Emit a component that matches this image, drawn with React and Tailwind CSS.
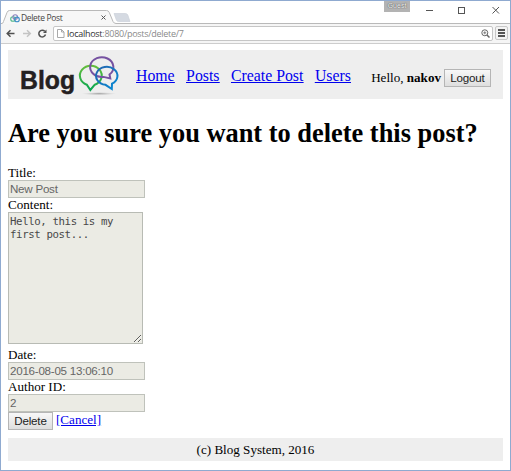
import React from "react";

function Favicon() {
  return (
    <svg className="ml-[9px] mt-[1px] h-[9px] w-[10px] shrink-0" viewBox="0 0 10 9" fill="none" strokeWidth="1.1">
      <circle cx="3" cy="5" r="2.3" stroke="#54b98b" />
      <circle cx="5.2" cy="3" r="2.3" stroke="#8d83bd" />
      <circle cx="7" cy="5.4" r="2.3" stroke="#4290c8" />
    </svg>
  );
}

function TabStrip() {
  return (
    <div className="relative flex h-[22px] items-start">
      <svg className="absolute left-0 top-0 h-[23px] w-[509px]" viewBox="0 0 509 23" fill="none">
        <path d="M0 22.5H2L6 11.500Q6.800 9.500 8.500 9.500H105.500Q107.500 9.500 108.300 11.500L113 22.500V23H0Z" fill="#f7f7f7" />
        <path d="M0 22.500H1Q2 22.500 2.500 20.500L6 11.500Q6.800 9.500 8.500 9.500H105.500Q107.500 9.500 108.300 11.500L112 20.500Q113 22.500 115 22.500H509" stroke="#b9b9b9" />
        <path d="M113 12.500H124.500Q126 12.500 126.800 14L129 20.500H117.500Q116 20.500 115.400 19Z" fill="#d5dae2" stroke="#cbd1da" strokeWidth=".7" />
      </svg>
      <div className="relative mt-[11px] flex h-[11px] w-[108px] items-center">
        <Favicon />
        <span className="ml-[1px] whitespace-nowrap font-['Open_Sans',sans-serif] text-[8.5px] leading-[11px] tracking-[-0.35px] text-[#444]">Delete Post</span>
        <svg className="ml-auto mr-[3px] h-[5px] w-[5px]" viewBox="0 0 5 5">
          <path d="M.5 .5L4.500 4.500M4.500 .5L.5 4.500" stroke="#555" />
        </svg>
      </div>
      <div className="relative ml-[275px] h-[11px] w-[26px] bg-[#b3b3b3] text-center font-['Liberation_Sans',sans-serif] text-[7px] leading-[10px] text-[#f4f4f4] [text-shadow:0_0_1px_#555,0_0_1px_#555]">Guest</div>
      <svg className="absolute left-[424px] top-[5px] h-[9px] w-[75px]" viewBox="0 0 75 9" fill="none" stroke="#555">
        <path d="M1 4.500H8M67.500 1L74 7.500M74 1L67.500 7.500" />
        <rect x="33.500" y="1.500" width="6" height="6" />
      </svg>
    </div>
  );
}

function Toolbar() {
  return (
    <div className="flex h-[21px] items-center border-b border-[#cdcdcd] bg-[#f5f5f5]">
      <svg className="h-[20px] w-[52px] shrink-0" viewBox="0 0 52 20" fill="none" strokeWidth="1.500">
        <path d="M13.500 10.500H6.500M9.500 7.200L6.200 10.500L9.500 13.800" stroke="#505050" />
        <path d="M22 10.500H29M26 7.200L29.300 10.500L26 13.800" stroke="#c4c4c4" />
        <path d="M43.800 8.300A3.400 3.400 0 1 0 44.500 11.500" stroke="#505050" />
        <path d="M45.500 6.500V10H42Z" fill="#505050" />
      </svg>
      <div className="flex h-[15px] w-[99px] grow items-center rounded-[2px] border border-[#c6c6c6] bg-white">
        <svg className="ml-[3px] h-[9px] w-[8px]" viewBox="0 0 8 9" fill="none" stroke="#a0a0a0" strokeWidth=".9">
          <path d="M.5 .5H4.500L7 3V8.500H.5ZM4.500 .5V3H7" />
        </svg>
        <span className="ml-[2px] mt-[1px] whitespace-nowrap font-['Open_Sans',sans-serif] text-[9px] leading-[12px] tracking-[-0.27px] text-[#8a8a8a]">
          <span className="text-[#333]">localhost</span>:8080/posts/delete/7
        </span>
        <svg className="ml-auto mr-[2px] h-[9px] w-[9px]" viewBox="0 0 9 9" fill="none" stroke="#666">
          <path d="M6 6L8.500 8.500" strokeWidth="1.500" />
          <circle cx="3.800" cy="3.800" r="3" />
          <path d="M2.300 3.800H5.300M3.800 2.300V5.300" strokeWidth=".8" />
        </svg>
      </div>
      <div className="ml-[2px] mr-[2px] flex h-[14px] w-[13px] shrink-0 flex-col items-center justify-center gap-[1px] rounded-[2px] border border-[#c8c8c8] bg-[#f4f4f4]">
        <div className="h-[2px] w-[7px] bg-[#555]" />
        <div className="h-[2px] w-[7px] bg-[#555]" />
        <div className="h-[2px] w-[7px] bg-[#555]" />
      </div>
    </div>
  );
}

function Logo() {
  return (
    <svg className="h-[49px] w-[115px] shrink-0" viewBox="0 0 115 49">
      <defs>
        <radialGradient id="shadow">
          <stop offset="0" stopColor="#777" stopOpacity=".65" />
          <stop offset="1" stopColor="#aaa" stopOpacity="0" />
        </radialGradient>
        <linearGradient id="green" x1="0" y1="0" x2="0" y2="1">
          <stop stopColor="#64bd3c" />
          <stop offset="1" stopColor="#08a651" />
        </linearGradient>
        <linearGradient id="blue" x1="0" y1="0" x2="1" y2="1">
          <stop stopColor="#2364ae" />
          <stop offset="1" stopColor="#078bd5" />
        </linearGradient>
      </defs>
      <text x="12" y="38.500" textLength="55" lengthAdjust="spacingAndGlyphs" fill="#242021" stroke="#242021" strokeWidth=".5" fontFamily="Liberation Sans, Arial, sans-serif" fontSize="26.500" fontWeight="700">Blog</text>
      <ellipse cx="91" cy="43.700" rx="17" ry="1.600" fill="url(#shadow)" />
      <g fill="none" strokeWidth="2" strokeLinejoin="miter">
        <path d="M82.300 40L78.800 34.700A10.900 9.800 0 1 1 86.800 34.700Z" stroke="url(#green)" />
        <path d="M102.300 28.500L101.500 24.500A11.600 9.900 0 1 0 95.500 26.900Z" stroke="#7652a1" />
        <path d="M103.800 39L104 33.700A10.700 9 0 1 0 97.500 34.800Z" stroke="url(#blue)" />
      </g>
    </svg>
  );
}

function Button({ children, className }) {
  return (
    <button className={`block border border-[#b5b5b5] bg-linear-to-b from-[#f8f8f8] to-[#dedede] p-0 text-center font-['Liberation_Sans',Arial,sans-serif] text-[#222] ${className}`}>
      {children}
    </button>
  );
}

function Field({ label, value }) {
  return (
    <label className="block">
      <span className="block h-[14px] leading-[14px]">{label}</span>
      <input
        disabled
        value={value}
        className="block h-[18px] w-[137px] rounded-none border border-[#bfc2bb] bg-[#ebebe4] px-[1px] pt-0 pb-[1px] font-['Liberation_Sans',Arial,sans-serif] text-[11.6px] leading-[15px] tracking-[-0.25px] text-[#666]"
      />
    </label>
  );
}

export default function App() {
  return (
    <div className="h-[471px] w-[511px] overflow-hidden border border-[#8faad0] bg-white font-['Liberation_Serif','Times_New_Roman',serif] text-[13.1px] text-black">
      <TabStrip />
      <Toolbar />
      <main className="px-[7px] pt-[6px]">
        <header className="flex h-[49px] bg-[#eee]">
          <Logo />
          <nav className="ml-[13px] flex gap-[11.500px] pt-[16px] text-[15.800px] leading-[20px] text-[#0000ee] underline">
            <a href="#home">Home</a>
            <a href="#posts">Posts</a>
            <a href="#create" className="whitespace-nowrap">Create Post</a>
            <a href="#users">Users</a>
          </nav>
          <div className="ml-auto mr-[12px] flex gap-[3px] whitespace-nowrap pt-[19px]">
            <span className="leading-[17px]">Hello, <b>nakov</b></span>
            <Button className="h-[18px] w-[47px] text-[11.600px] leading-[16px] tracking-[-0.2px]">Logout</Button>
          </div>
        </header>
        <h1 className="mt-[19px] h-[30px] whitespace-nowrap text-[26.400px] font-bold leading-[30px]">Are you sure you want to delete this post?</h1>
        <form className="mt-[18px]">
          <Field label="Title:" value="New Post" />
          <label className="block">
            <span className="block h-[14px] leading-[14px]">Content:</span>
            <textarea
              disabled
              value="Hello, this is my first post..."
              className="block h-[132px] w-[135px] resize rounded-none border border-[#b8bbb4] bg-[#ebebe4] px-[1px] py-[3px] font-['DejaVu_Sans_Mono',monospace] text-[10.700px] leading-[12.500px] tracking-[-0.37px] text-[#484848]"
            />
          </label>
          <div className="mt-[4px]">
            <Field label="Date:" value="2016-08-05 13:06:10" />
            <Field label="Author ID:" value="2" />
          </div>
          <div className="flex gap-[3px]">
            <Button className="h-[18px] w-[45px] text-[11.600px] leading-[16px] tracking-[-0.2px]">Delete</Button>
            <a href="#cancel" className="leading-[16px] text-[#0000ee] underline">[Cancel]</a>
          </div>
        </form>
        <footer className="mt-[8px] h-[23px] bg-[#eee] text-center leading-[23px]">(c) Blog System, 2016</footer>
      </main>
    </div>
  );
}
